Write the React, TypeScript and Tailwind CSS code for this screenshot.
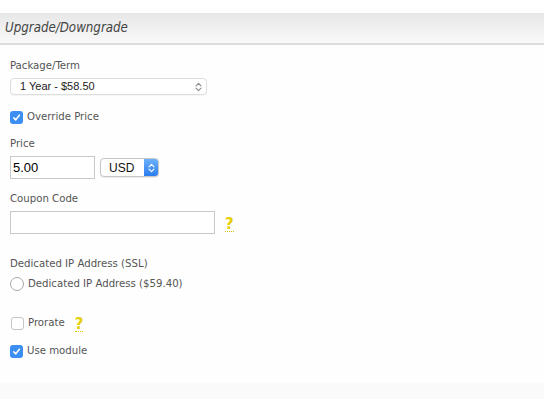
import React from "react";

const label = "font-['DejaVu_Sans_Condensed',Tahoma,'DejaVu_Sans',sans-serif] text-[11.3px] text-[#555]";

function Check({ checked }: { checked: boolean }) {
  if (!checked) {
    return <span className="box-border h-[13px] w-[13px] shrink-0 rounded-[3px] border border-[#c4c4c4] bg-white" />;
  }
  return (
    <span className="flex h-[13px] w-[13px] shrink-0 items-center justify-center rounded-[3px] bg-[#3b8ef3]">
      <svg width="9" height="9" viewBox="0 0 10 10" fill="none">
        <path d="M2 5.4 4.2 7.6 8.2 2.4" stroke="white" strokeWidth="1.7" strokeLinecap="round" strokeLinejoin="round" />
      </svg>
    </span>
  );
}

function Help() {
  return (
    <span className="inline-block border-b border-dotted border-[#d9c200] font-['DejaVu_Sans',sans-serif] text-[15px] font-bold leading-[14px] text-[#e6cf00]">
      ?
    </span>
  );
}

function UpDown({ color }: { color: string }) {
  return (
    <svg width="7" height="10" viewBox="0 0 7 10" fill="none">
      <path d="M1 3.8 3.5 1.3 6 3.8M1 6.2 3.5 8.7 6 6.2" stroke={color} strokeWidth="1.1" strokeLinecap="round" strokeLinejoin="round" />
    </svg>
  );
}

export default function App() {
  return (
    <div className="flex h-[399px] w-[544px] flex-col bg-[#fefefe]">
      <div className="h-[13px] bg-white" />
      <div className="flex h-[32px] items-center border-b-2 border-[#dcdcdc] bg-gradient-to-b from-[#e7e7e7] to-[#f9f9f9] px-[5px]">
        <span className="font-['DejaVu_Sans_Condensed',Tahoma,'DejaVu_Sans',sans-serif] text-[13.2px] italic text-[#444]">Upgrade/Downgrade</span>
      </div>

      <div className="flex flex-col px-[10px]">
        <div className={`mt-[14px] h-[14px] leading-[14px] ${label}`}>Package/Term</div>
        <div className="mt-[5px] flex h-[17px] w-[197px] items-center justify-between rounded-[4px] border border-[#dedede] bg-white pl-[9px] pr-[4px] shadow-[0_1px_1px_rgba(0,0,0,0.04)]">
          <span className="font-['Liberation_Sans',Arial,sans-serif] text-[11px] text-[#222]">1 Year - $58.50</span>
          <UpDown color="#8a8a8a" />
        </div>

        <div className="mt-[15px] flex h-[14px] items-center gap-[4px]">
          <Check checked />
          <span className={label}>Override Price</span>
        </div>

        <div className={`mt-[13px] h-[14px] leading-[14px] ${label}`}>Price</div>
        <div className="mt-[5px] flex h-[23px] items-center gap-[5px]">
          <div className="box-border flex h-[23px] w-[85px] items-center border border-[#c8c8c8] bg-white px-[2px]">
            <span className="font-['Liberation_Sans',Arial,sans-serif] text-[13px] text-black">5.00</span>
          </div>
          <div className="box-border flex h-[19px] w-[59px] overflow-hidden rounded-[4px] border border-[#c6c6c6] bg-white shadow-[0_1px_1px_rgba(0,0,0,0.08)]">
            <span className="flex flex-1 items-center pl-[8px] font-['Liberation_Sans',Arial,sans-serif] text-[12px] text-[#111]">USD</span>
            <span className="flex w-[14px] items-center justify-center bg-gradient-to-b from-[#6cb0fb] to-[#2a7cf0]">
              <UpDown color="#ffffff" />
            </span>
          </div>
        </div>

        <div className={`mt-[13px] h-[14px] leading-[14px] ${label}`}>Coupon Code</div>
        <div className="mt-[5px] flex h-[23px] items-center">
          <div className="box-border h-[23px] w-[205px] border border-[#c8c8c8] bg-white" />
          <span className="ml-[10px] mt-[1px]">
            <Help />
          </span>
        </div>

        <div className={`mt-[23px] h-[14px] leading-[14px] ${label}`}>Dedicated IP Address (SSL)</div>
        <div className="mt-[6px] flex h-[14px] items-center gap-[4px]">
          <span className="box-border h-[14px] w-[14px] shrink-0 rounded-full border border-[#a8a8a8] bg-white" />
          <span className={label}>Dedicated IP Address ($59.40)</span>
        </div>

        <div className="mt-[25px] flex h-[14px] items-center gap-[4px] pl-px">
          <Check checked={false} />
          <span className={label}>Prorate</span>
          <span className="ml-[6px]">
            <Help />
          </span>
        </div>

        <div className="mt-[14px] flex h-[14px] items-center gap-[4px]">
          <Check checked />
          <span className={label}>Use module</span>
        </div>
      </div>

      <div className="mt-auto h-[16px] bg-[#fafafa]" />
    </div>
  );
}
